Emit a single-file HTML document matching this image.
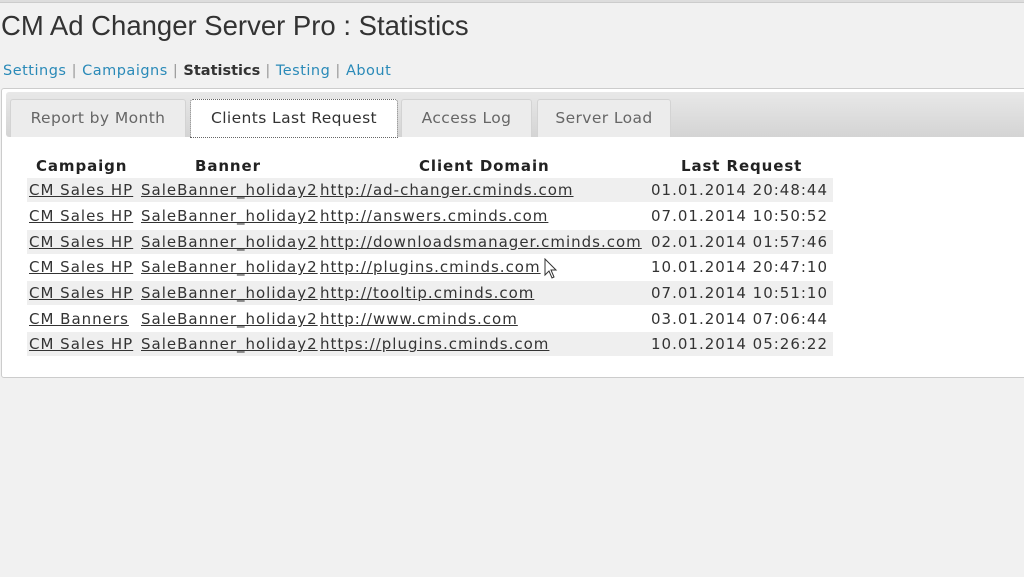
<!DOCTYPE html>
<html><head><style>
*{margin:0;padding:0;box-sizing:border-box}
body{width:1024px;height:577px;background:#f1f1f1;font-family:"DejaVu Sans","Liberation Sans",sans-serif;position:relative;overflow:hidden;color:#333}
.top{position:absolute;left:0;top:0;width:1024px;height:3px;background:#ddd;border-bottom:1px solid #ccc}
h1{position:absolute;left:1px;top:10px;font:400 27.5px "Liberation Sans",sans-serif;color:#333;white-space:nowrap}
.nav{position:absolute;left:3px;top:63px;font-size:14.5px;letter-spacing:0.5px;color:#999;white-space:nowrap}
.nav a{color:#2a8ab8;text-decoration:none}
.nav b{color:#333;font-weight:bold;letter-spacing:0}
.panel{position:absolute;left:1px;top:88px;width:1030px;height:290px;background:#fff;border:1px solid #ccc;border-radius:3px}
.band{position:absolute;left:4px;top:3px;width:1030px;height:45px;background:linear-gradient(#e8e8e8,#d4d4d4);border-radius:3px}
.tab{position:absolute;top:10px;height:38px;background:#ececec;border:1px solid #d3d3d3;border-bottom:none;font-size:15.5px;letter-spacing:0.4px;color:#666;text-align:center;line-height:37px;border-radius:3px 3px 0 0}
.tab.act{background:#fff;border:1px dotted #666;color:#333;height:39px}
.c{position:absolute;font-size:15px;letter-spacing:1px;white-space:nowrap;color:#333}
.c.u{text-decoration:underline}
.h{position:absolute;font-weight:bold;font-size:15px;letter-spacing:0.9px;color:#222;white-space:nowrap}
.row{position:absolute;left:27px;width:806px;height:24px;background:#efefef}
</style></head><body>
<div class="top"></div>
<h1>CM Ad Changer Server Pro : Statistics</h1>
<div class="nav"><a>Settings</a> | <a>Campaigns</a> | <b>Statistics</b> | <a>Testing</a> | <a>About</a></div>
<div class="panel">
<div class="band"></div>
<div class="tab" style="left:8px;width:176px">Report by Month</div>
<div class="tab act" style="left:188px;width:208px">Clients Last Request</div>
<div class="tab" style="left:399px;width:131px">Access Log</div>
<div class="tab" style="left:535px;width:134px">Server Load</div>
</div>
<div class="h" style="left:36px;top:157px">Campaign</div>
<div class="h" style="left:195px;top:157px">Banner</div>
<div class="h" style="left:419px;top:157px">Client Domain</div>
<div class="h" style="left:681px;top:157px">Last Request</div>

<div class="row" style="top:178px"></div>
<div class="row" style="top:230px"></div>
<div class="row" style="top:281px"></div>
<div class="row" style="top:332px"></div>

<div class="c u" style="left:29px;top:181px">CM Sales HP</div><div class="c u" style="left:141px;top:181px">SaleBanner_holiday2</div><div class="c u" style="left:320px;top:181px">http://ad-changer.cminds.com</div><div class="c" style="left:651px;top:181px">01.01.2014 20:48:44</div>
<div class="c u" style="left:29px;top:207px">CM Sales HP</div><div class="c u" style="left:141px;top:207px">SaleBanner_holiday2</div><div class="c u" style="left:320px;top:207px">http://answers.cminds.com</div><div class="c" style="left:651px;top:207px">07.01.2014 10:50:52</div>
<div class="c u" style="left:29px;top:233px">CM Sales HP</div><div class="c u" style="left:141px;top:233px">SaleBanner_holiday2</div><div class="c u" style="left:320px;top:233px">http://downloadsmanager.cminds.com</div><div class="c" style="left:651px;top:233px">02.01.2014 01:57:46</div>
<div class="c u" style="left:29px;top:258px">CM Sales HP</div><div class="c u" style="left:141px;top:258px">SaleBanner_holiday2</div><div class="c u" style="left:320px;top:258px">http://plugins.cminds.com</div><div class="c" style="left:651px;top:258px">10.01.2014 20:47:10</div>
<div class="c u" style="left:29px;top:284px">CM Sales HP</div><div class="c u" style="left:141px;top:284px">SaleBanner_holiday2</div><div class="c u" style="left:320px;top:284px">http://tooltip.cminds.com</div><div class="c" style="left:651px;top:284px">07.01.2014 10:51:10</div>
<div class="c u" style="left:29px;top:310px">CM Banners</div><div class="c u" style="left:141px;top:310px">SaleBanner_holiday2</div><div class="c u" style="left:320px;top:310px">http://www.cminds.com</div><div class="c" style="left:651px;top:310px">03.01.2014 07:06:44</div>
<div class="c u" style="left:29px;top:335px">CM Sales HP</div><div class="c u" style="left:141px;top:335px">SaleBanner_holiday2</div><div class="c u" style="left:320px;top:335px">https://plugins.cminds.com</div><div class="c" style="left:651px;top:335px">10.01.2014 05:26:22</div>

<svg style="position:absolute;left:544px;top:258px" width="14" height="22" viewBox="0 0 14 22"><path d="M1 1 L1 17 L5 13 L8 20 L10 19 L7 12 L12 12 Z" fill="#fff" stroke="#333" stroke-width="1"/></svg>
</body></html>
